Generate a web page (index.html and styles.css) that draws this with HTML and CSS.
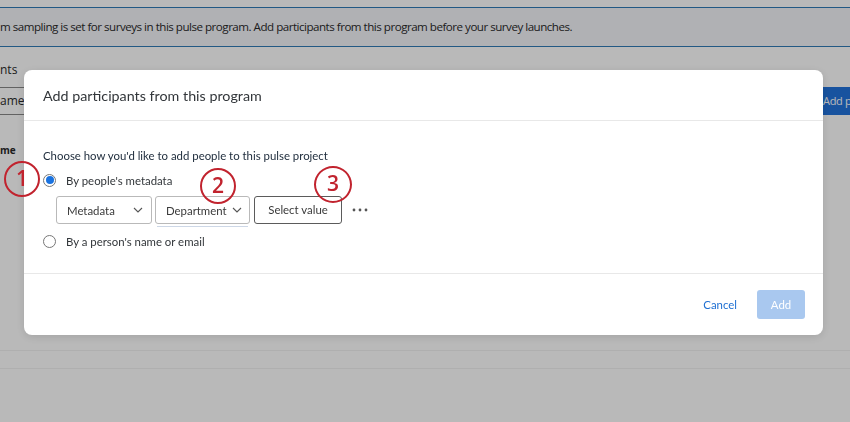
FILE: index.html
```html
<!DOCTYPE html>
<html>
<head>
<meta charset="utf-8">
<link rel="stylesheet" href="styles.css">
</head>
<body>
<div class="page">
  <div class="topbar"></div>
  <div class="banner">m sampling is set for surveys in this pulse program. Add participants from this program before your survey launches.</div>
  <div class="section-title">nts</div>
  <div class="toolbar">
    <div class="search">ame</div>
    <div class="add-btn">Add p</div>
  </div>
  <div class="table-head">me</div>
  <div class="table-row"></div>
  <div class="table-row"></div>
</div>

<div class="overlay">
  <div class="modal">
    <div class="modal-header">Add participants from this program</div>
    <div class="modal-body">
      <p class="prompt">Choose how you'd like to add people to this pulse project</p>
      <div class="radio-row"><span class="radio checked"></span><span>By people's metadata</span></div>
      <div class="filters">
        <div class="select meta"><span>Metadata</span><svg class="chev" viewBox="0 0 10 6" width="10" height="6"><path d="M1 1 L5 5 L9 1" fill="none" stroke="#555" stroke-width="1.1"/></svg></div>
        <div class="select dept"><span>Department</span><svg class="chev" viewBox="0 0 10 6" width="10" height="6"><path d="M1 1 L5 5 L9 1" fill="none" stroke="#555" stroke-width="1.1"/></svg></div>
        <div class="value-btn">Select value</div>
        <svg class="more" viewBox="0 0 16 4" width="16" height="4"><circle cx="2" cy="2" r="1.4" fill="#555"/><circle cx="8" cy="2" r="1.4" fill="#555"/><circle cx="14" cy="2" r="1.4" fill="#555"/></svg>
      </div>
      <div class="radio-row second"><span class="radio"></span><span>By a person's name or email</span></div>
    </div>
    <div class="modal-footer">
      <span class="cancel">Cancel</span>
      <span class="primary">Add</span>
    </div>
  </div>
</div>

<div class="callout c1">1</div>
<div class="callout c2">2</div>
<div class="callout c3">3</div>
</body>
</html>
```

FILE: styles.css
```css
html, body {
  margin: 0;
  padding: 0;
  width: 850px;
  height: 422px;
  overflow: hidden;
  background: #ffffff;
  font-family: "Open Sans", "Liberation Sans", sans-serif;
}

.page {
  width: 850px;
  height: 422px;
  overflow: hidden;
  color: #2a2a2a;
}

.topbar {
  height: 7px;
}

.banner {
  height: 38px;
  border-top: 1px solid #2f7bb6;
  border-bottom: 1px solid #2f7bb6;
  background: #f3f4f9;
  font-size: 11.6px;
  line-height: 38px;
  letter-spacing: -0.5px;
  white-space: nowrap;
  color: #2a2a2a;
}

.section-title {
  font-size: 12px;
  line-height: 16px;
  margin-top: 15px;
  height: 16px;
}

.toolbar {
  display: flex;
  justify-content: space-between;
  margin-top: 9px;
  height: 28px;
}

.search {
  width: 300px;
  height: 26px;
  border-top: 1px solid #888;
  border-bottom: 1px solid #888;
  font-size: 12px;
  line-height: 26px;
  box-sizing: content-box;
}

.add-btn {
  width: 28px;
  height: 28px;
  background: #2273dc;
  color: #fff;
  font-size: 11px;
  letter-spacing: -0.3px;
  line-height: 28px;
  white-space: nowrap;
  overflow: hidden;
  padding-left: 1px;
  box-sizing: border-box;
}

.table-head {
  margin-top: 28px;
  font-size: 10px;
  font-weight: 700;
  line-height: 14px;
}

.table-row {
  height: 1px;
  background: #f2f2f2;
  margin-top: 193px;
}
.table-row + .table-row {
  margin-top: 17px;
}

.overlay {
  position: fixed;
  inset: 0;
  background: rgba(0, 0, 0, 0.275);
  display: flex;
  justify-content: center;
  align-items: flex-start;
  padding-top: 70px;
  box-sizing: border-box;
}

.modal {
  width: 799px;
  margin-left: -3px;
  background: #fff;
  border-radius: 8px;
  box-shadow: 0 2px 10px rgba(0, 0, 0, 0.12);
  color: #32363a;
  font-family: "Lato", "Open Sans", sans-serif;
}

.modal-header {
  height: 50px;
  border-bottom: 1px solid #e8e8e8;
  padding-left: 19px;
  font-size: 14.3px;
  line-height: 52px;
  color: #32363a;
}

.modal-body {
  padding: 26px 19px 23px;
  border-bottom: 1px solid #e8e8e8;
}

.prompt {
  margin: 0;
  font-size: 11.4px;
  line-height: 18px;
  color: #1c2a3a;
}

.radio-row {
  display: flex;
  align-items: center;
  gap: 10px;
  margin-top: 6px;
  height: 18px;
  font-size: 11.4px;
  color: #32363a;
}
.radio-row.second {
  margin-top: 8px;
}

.radio {
  width: 11px;
  height: 11px;
  border: 1px solid #777;
  border-radius: 50%;
  position: relative;
  flex: none;
}
.radio.checked::after {
  content: "";
  position: absolute;
  left: 1.5px;
  top: 1.5px;
  width: 8px;
  height: 8px;
  border-radius: 50%;
  background: #1a73e0;
}

.filters {
  display: flex;
  align-items: center;
  margin-top: 7px;
  margin-left: 13px;
  height: 28px;
}

.select {
  height: 28px;
  box-sizing: border-box;
  border: 1px solid #b9b9b9;
  border-radius: 3px;
  display: flex;
  align-items: center;
  justify-content: space-between;
  font-size: 11.4px;
  color: #3a3a3a;
  padding: 0 8px 0 10px;
}
.select.meta {
  width: 96px;
}
.select.dept {
  width: 95px;
  margin-left: 3px;
  position: relative;
  padding-right: 7px;
}
.select.dept::after {
  content: "";
  position: absolute;
  left: 1px;
  right: 1px;
  bottom: -4px;
  height: 1px;
  background: #cdd7e6;
}

.chev {
  display: block;
}

.value-btn {
  width: 88px;
  height: 28px;
  margin-left: 4px;
  box-sizing: border-box;
  border: 1px solid #5b5b5b;
  border-radius: 3px;
  font-size: 11.4px;
  line-height: 26px;
  text-align: center;
  color: #3a3a3a;
}

.more {
  margin-left: 10px;
  display: block;
}

.modal-footer {
  height: 61px;
  display: flex;
  align-items: center;
  justify-content: flex-end;
  padding-right: 18px;
}

.cancel {
  color: #1e6fd2;
  font-size: 11.4px;
  margin-right: 20px;
}

.primary {
  width: 48px;
  height: 29px;
  line-height: 29px;
  text-align: center;
  background: #a9c8ef;
  color: #fff;
  border-radius: 3px;
  font-size: 11.4px;
}

.callout {
  position: absolute;
  width: 36px;
  height: 36px;
  box-sizing: border-box;
  border: 2.5px solid #c1232e;
  border-radius: 50%;
  color: #c1232e;
  font-family: "Open Sans", "Liberation Sans", sans-serif;
  font-weight: 600;
  font-size: 21px;
  line-height: 31px;
  text-align: center;
}
.c1 { left: 4px; top: 161px; }
.c2 { left: 200px; top: 168px; }
.c3 { left: 314px; top: 166px; width: 38px; height: 37px; }
```
